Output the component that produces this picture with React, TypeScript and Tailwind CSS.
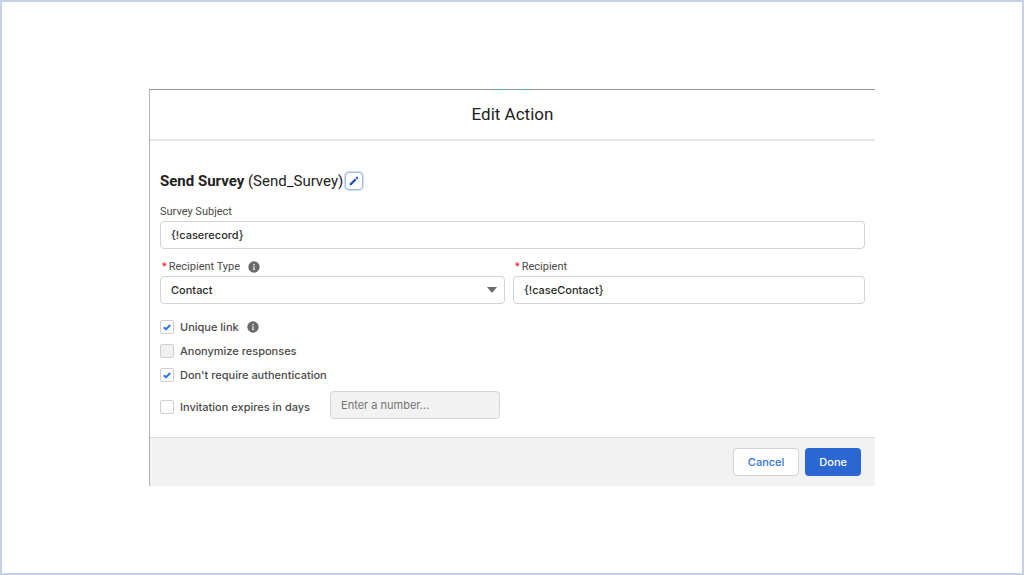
import { useState } from 'react';

const inputStyles =
  'h-7 w-full rounded border border-[#d3d3d3] bg-white px-2.5 text-[11px] font-medium text-[#2b2b2b] outline-none';

const labelStyles = "font-['Roboto',sans-serif] text-[11px] text-[#4a4a4a]";

function InfoIcon() {
  return (
    <svg viewBox="0 0 12 12" className="h-3 w-3 flex-shrink-0" aria-hidden="true">
      <circle cx="6" cy="6" r="5.7" fill="#6b6b6b" />
      <circle cx="6" cy="3.6" r="0.9" fill="#e6e6e6" />
      <path d="M5 5.3h1.6v2.9h.6v.8H4.9v-.8h.5V6.1H5z" fill="#e6e6e6" />
    </svg>
  );
}

function Required() {
  return <span className="mr-0.5 text-[#ee1111]" aria-hidden="true">*</span>;
}

interface CheckProps {
  id: string;
  label: string;
  initial?: boolean;
  disabled?: boolean;
  info?: boolean;
}

function CheckRow({ id, label, initial = false, disabled = false, info = false }: CheckProps) {
  const [checked, setChecked] = useState(initial);

  return (
    <div className="flex h-6 items-center">
      <span className="relative h-3.5 w-3.5 flex-shrink-0">
        <input
          id={id}
          type="checkbox"
          checked={checked}
          disabled={disabled}
          onChange={(e) => setChecked(e.target.checked)}
          className="block h-3.5 w-3.5 appearance-none rounded-xs border border-[#cfcfcf] bg-white disabled:bg-[#f0f0f0]"
        />
        {checked && (
          <svg viewBox="0 0 14 14" className="pointer-events-none absolute inset-0 h-3.5 w-3.5" aria-hidden="true">
            <path d="M3.8 7.2l2.2 2.1L10.2 5" fill="none" stroke="#2f78ee" strokeWidth="2" />
          </svg>
        )}
      </span>
      <label htmlFor={id} className="ml-1.5 text-[11px] font-medium text-[#4a4a4a]">{label}</label>
      {info && <span className="ml-2"><InfoIcon /></span>}
    </div>
  );
}

export default function App() {
  const [subject, setSubject] = useState('{!caserecord}');
  const [recipient, setRecipient] = useState('{!caseContact}');

  return (
    <div className="flex min-h-screen items-center justify-center border-2 border-[#c5d0e4] bg-white font-['Inter',sans-serif]">
      <div role="dialog" aria-labelledby="title" className="relative w-full max-w-[726px] border-t border-l border-t-[#949494] border-l-[#b5b5b5] bg-white">
        <span className="absolute -top-px left-[342px] h-px w-3.5 bg-[#5fa79b]" />
        <span className="absolute -top-px left-[368px] h-px w-3.5 bg-[#5fa79b]" />

        {/* Header */}
        <div className="flex h-[51px] items-center justify-center border-b-2 border-[#e5e5e5]">
          <h1 id="title" className="font-['Roboto',sans-serif] text-[17px] text-[#222222]">Edit Action</h1>
        </div>

        {/* Body */}
        <div className="px-2.5 pt-[30px] pb-[18px]">
          <div className="flex h-5 items-center">
            <h2 className="font-['Roboto',sans-serif] text-[15px] text-[#222222]">
              <strong className="font-bold">Send Survey</strong> (Send_Survey)
            </h2>
            <button
              aria-label="Edit label"
              className="ml-0.5 flex h-[18px] w-[18px] items-center justify-center rounded-sm border border-[#9dbbe9] bg-white ring-1 ring-[#cfdff7]"
            >
              <svg viewBox="0 0 12 12" className="h-3 w-3" aria-hidden="true">
                <path d="M1.4 10.6l.6-2.3 4.9-4.9 1.7 1.7-4.9 4.9z" fill="#2b56b0" />
                <path d="M7.5 2.8l1-1a.6.6 0 01.8 0l.9.9a.6.6 0 010 .8l-1 1z" fill="#2b56b0" />
              </svg>
            </button>
          </div>

          <label htmlFor="subject" className={`mt-[13px] flex h-4 items-center ${labelStyles}`}>Survey Subject</label>
          <input id="subject" value={subject} onChange={(e) => setSubject(e.target.value)} className={`mt-px block ${inputStyles}`} />

          <div className="mt-2.5 grid grid-cols-[49fr_50fr] gap-2">
            <div>
              <div className="flex h-4 items-center pl-0.5">
                <label htmlFor="type" className={labelStyles}><Required />Recipient Type</label>
                <span className="ml-2"><InfoIcon /></span>
              </div>
              <div className="relative mt-px">
                <select id="type" className={`block appearance-none ${inputStyles}`}>
                  <option>Contact</option>
                </select>
                <svg viewBox="0 0 10 6" className="pointer-events-none absolute top-[11px] right-2 h-1.5 w-2.5" aria-hidden="true">
                  <path d="M0 0h10L5 6z" fill="#6b6b6b" />
                </svg>
              </div>
            </div>
            <div>
              <div className="flex h-4 items-center pl-0.5">
                <label htmlFor="recipient" className={labelStyles}><Required />Recipient</label>
              </div>
              <input id="recipient" value={recipient} onChange={(e) => setRecipient(e.target.value)} className={`mt-px block ${inputStyles}`} />
            </div>
          </div>

          <div className="mt-[11px]">
            <CheckRow id="unique" label="Unique link" initial info />
            <CheckRow id="anonymize" label="Anonymize responses" disabled />
            <CheckRow id="auth" label="Don't require authentication" initial />
            <div className="mt-1 flex h-7 items-end gap-5">
              <CheckRow id="expires" label="Invitation expires in days" />
              <input
                aria-label="Days until the invitation expires"
                placeholder="Enter a number..."
                disabled
                className="h-7 w-[170px] rounded border border-[#d3d3d3] bg-[#f2f2f2] px-2.5 text-[11px] placeholder:text-[#757575]"
              />
            </div>
          </div>
        </div>

        {/* Footer */}
        <div className="flex items-center justify-end gap-1.5 border-t border-[#dcdcdc] bg-[#f2f2f2] py-2.5 pr-3.5">
          <button className="h-7 rounded border border-[#d3d3d3] bg-white px-3.5 text-[11px] font-medium text-[#2f75e0]">Cancel</button>
          <button className="h-7 rounded bg-[#2b67d1] px-3.5 text-[11px] font-medium text-white">Done</button>
        </div>
      </div>
    </div>
  );
}
